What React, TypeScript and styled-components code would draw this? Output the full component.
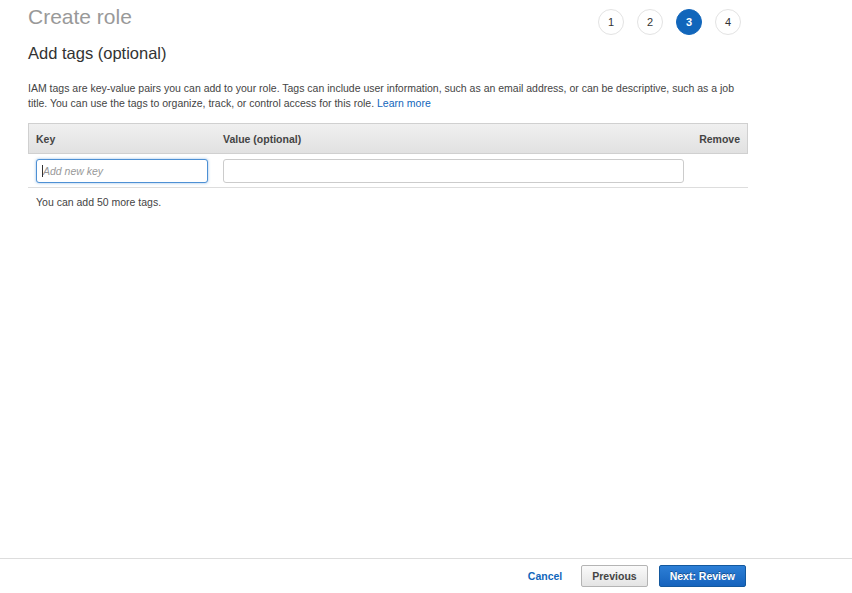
import React from "react";
import styled, { createGlobalStyle } from "styled-components";

const Global = createGlobalStyle`
  html, body { margin: 0; padding: 0; background: #fff; }
  body { font-family: "Liberation Sans", Arial, sans-serif; color: #444; }
  * { box-sizing: border-box; }
`;

const Page = styled.div`
  width: 852px;
  height: 593px;
  display: flex;
  flex-direction: column;
`;

const Main = styled.div`
  flex: 1;
  padding: 4px 104px 0 28px;
`;

const TopBar = styled.div`
  display: flex;
  justify-content: space-between;
  align-items: flex-start;
`;

const Title = styled.h1`
  margin: 0;
  font-size: 21px;
  font-weight: normal;
  color: #999;
  line-height: 26px;
`;

const Steps = styled.div`
  display: flex;
  gap: 13px;
  margin-top: 5px;
  margin-right: 7px;
`;

const Step = styled.div<{ $active?: boolean }>`
  width: 26px;
  height: 26px;
  border-radius: 50%;
  display: flex;
  align-items: center;
  justify-content: center;
  font-size: 11px;
  font-weight: ${(p) => (p.$active ? "bold" : "normal")};
  color: ${(p) => (p.$active ? "#fff" : "#333")};
  background: ${(p) => (p.$active ? "#1166bb" : "#fff")};
  border: 1px solid ${(p) => (p.$active ? "#1166bb" : "#e3e3e3")};
`;

const Subtitle = styled.h2`
  margin: 8px 0 0;
  font-size: 16.5px;
  font-weight: normal;
  color: #333;
  line-height: 20px;
`;

const Desc = styled.p`
  margin: 18px 0 0;
  font-size: 10.5px;
  line-height: 15px;
  color: #444;
  width: 716px;
`;

const Link = styled.a`
  color: #1166bb;
  text-decoration: none;
`;

const Table = styled.div`
  margin-top: 12px;
  width: 720px;
  border-bottom: 1px solid #ddd;
`;

const HeaderRow = styled.div`
  display: grid;
  grid-template-columns: 187px 1fr 80px;
  height: 31px;
  align-items: center;
  background: linear-gradient(#f0f0f0, #e1e1e1);
  border: 1px solid #d0d0d0;
  font-size: 10.5px;
  font-weight: bold;
  color: #444;
`;

const HeadCell = styled.div<{ $right?: boolean }>`
  padding: 0 7px;
  text-align: ${(p) => (p.$right ? "right" : "left")};
`;

const BodyRow = styled.div`
  display: grid;
  grid-template-columns: 187px 469px 1fr;
  padding: 5px 0 4px;
  align-items: center;
`;

const Cell = styled.div`
  padding-left: 8px;
`;

const KeyWrap = styled.div`
  position: relative;
`;

const Input = styled.input<{ $focus?: boolean }>`
  display: block;
  width: ${(p) => (p.$focus ? "172px" : "461px")};
  height: 24px;
  border-radius: 3px;
  border: 1px solid ${(p) => (p.$focus ? "#4d90d4" : "#ccc")};
  box-shadow: ${(p) => (p.$focus ? "0 0 3px rgba(77,144,212,0.6)" : "none")};
  font-family: "Liberation Sans", Arial, sans-serif;
  font-size: 10.5px;
  padding: 0 6px;
  outline: none;
  &::placeholder {
    color: #999;
    font-style: italic;
  }
`;

const CaretLine = styled.span`
  position: absolute;
  left: 6px;
  top: 6px;
  width: 1px;
  height: 12px;
  background: #333;
`;

const Note = styled.div`
  font-size: 10.5px;
  color: #444;
  padding: 8px 0 0 8px;
`;

const Footer = styled.div`
  height: 35px;
  border-top: 1px solid #ddd;
  display: flex;
  justify-content: flex-end;
  align-items: center;
  padding-right: 106px;
  gap: 11px;
`;

const CancelLink = styled.a`
  color: #1166bb;
  font-size: 10.5px;
  font-weight: bold;
  margin-right: 8px;
  text-decoration: none;
`;

const Btn = styled.button<{ $primary?: boolean }>`
  height: 22px;
  padding: 0 10px;
  border-radius: 2px;
  font-family: "Liberation Sans", Arial, sans-serif;
  font-size: 10.5px;
  font-weight: bold;
  cursor: pointer;
  color: ${(p) => (p.$primary ? "#fff" : "#444")};
  background: ${(p) =>
    p.$primary
      ? "linear-gradient(#2d7fd6, #1663bd)"
      : "linear-gradient(#fafafa, #e4e4e4)"};
  border: 1px solid ${(p) => (p.$primary ? "#13589e" : "#b4b4b4")};
  text-shadow: ${(p) => (p.$primary ? "0 -1px 0 rgba(0,0,0,0.35)" : "none")};
`;

export default function App() {
  return (
    <Page>
      <Global />
      <Main>
        <TopBar>
          <Title>Create role</Title>
          <Steps>
            <Step>1</Step>
            <Step>2</Step>
            <Step $active>3</Step>
            <Step>4</Step>
          </Steps>
        </TopBar>
        <Subtitle>Add tags (optional)</Subtitle>
        <Desc>
          IAM tags are key-value pairs you can add to your role. Tags can include user
          information, such as an email address, or can be descriptive, such as a job
          title. You can use the tags to organize, track, or control access for this role.{" "}
          <Link href="#">Learn more</Link>
        </Desc>
        <Table>
          <HeaderRow>
            <HeadCell>Key</HeadCell>
            <HeadCell>Value (optional)</HeadCell>
            <HeadCell $right>Remove</HeadCell>
          </HeaderRow>
          <BodyRow>
            <Cell>
              <KeyWrap>
                <Input $focus placeholder="Add new key" readOnly />
                <CaretLine />
              </KeyWrap>
            </Cell>
            <Cell>
              <Input readOnly />
            </Cell>
            <Cell />
          </BodyRow>
        </Table>
        <Note>You can add 50 more tags.</Note>
      </Main>
      <Footer>
        <CancelLink href="#">Cancel</CancelLink>
        <Btn>Previous</Btn>
        <Btn $primary>Next: Review</Btn>
      </Footer>
    </Page>
  );
}
